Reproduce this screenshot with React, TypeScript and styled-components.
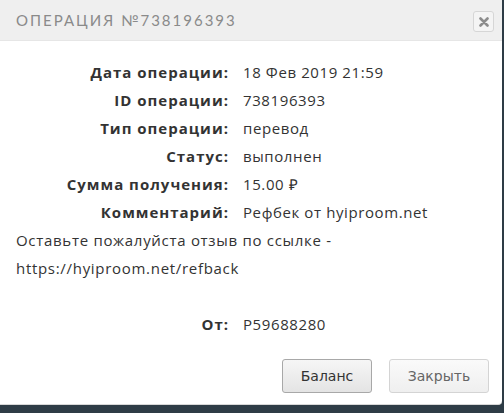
import React from 'react';
import styled, { createGlobalStyle } from 'styled-components';

const Global = createGlobalStyle`
  html, body {
    margin: 0;
    padding: 0;
    background: #2e3c46;
  }
  body {
    width: 504px;
    height: 413px;
    overflow: hidden;
  }
`;

const Dialog = styled.div`
  width: 502px;
  height: 405px;
  background: #fff;
  border-bottom: 1px solid #d8d8d8;
  border-bottom-right-radius: 4px;
  display: flex;
  flex-direction: column;
  font-family: 'Open Sans', sans-serif;
  color: #333;
  box-sizing: border-box;
`;

const Header = styled.div`
  height: 41px;
  background: #efefef;
  border-bottom: 1px solid #e6e6e6;
  box-sizing: border-box;
  display: flex;
  align-items: center;
  justify-content: space-between;
  padding: 0 8px 0 16px;
`;

const Title = styled.div`
  font-family: 'Lato', sans-serif;
  font-size: 15px;
  letter-spacing: 2px;
  color: #8a8a8a;
  text-transform: uppercase;
`;

const CloseBox = styled.button`
  width: 21px;
  height: 21px;
  padding: 0;
  border: 1px solid #d6d6d6;
  border-radius: 3px;
  background: #f4f4f4;
  display: flex;
  align-items: center;
  justify-content: center;
  margin-top: 3px;
`;

const Body = styled.div`
  padding: 17px 16px 0;
  font-size: 15px;
  line-height: 28px;
`;

const Row = styled.div<{ $gapTop?: boolean }>`
  display: grid;
  grid-template-columns: 212px 1fr;
  column-gap: 15px;
  margin-top: ${(p) => (p.$gapTop ? '28px' : '0')};
`;

const Label = styled.div`
  text-align: right;
  font-weight: 700;
  letter-spacing: 1px;
  margin-right: -1px;
  color: #333;
`;

const Value = styled.div`
  color: #333;
  letter-spacing: 0.6px;
`;

const Note = styled.div`
  color: #333;
  letter-spacing: 0.7px;
`;

const Footer = styled.div`
  margin-top: auto;
  padding: 0 13px 11px 0;
  display: flex;
  justify-content: flex-end;
  gap: 17px;
`;

const Button = styled.button<{ $primary?: boolean }>`
  height: 34px;
  padding: 0 16px;
  min-width: ${(p) => (p.$primary ? '90px' : '100px')};
  font-family: 'DejaVu Sans', sans-serif;
  font-size: 14px;
  border-radius: 3px;
  border: 1px solid ${(p) => (p.$primary ? '#a8a8a8' : '#d4d4d4')};
  color: ${(p) => (p.$primary ? '#333' : '#666')};
  background: ${(p) =>
    p.$primary
      ? 'linear-gradient(#f6f6f6, #e4e4e4)'
      : 'linear-gradient(#fafafa, #efefef)'};
`;

const rows: [string, string][] = [
  ['Дата операции:', '18 Фев 2019 21:59'],
  ['ID операции:', '738196393'],
  ['Тип операции:', 'перевод'],
  ['Статус:', 'выполнен'],
  ['Сумма получения:', '15.00 ₽'],
  ['Комментарий:', 'Рефбек от hyiproom.net'],
];

export default function App() {
  return (
    <>
      <Global />
      <Dialog>
        <Header>
          <Title>Операция №738196393</Title>
          <CloseBox aria-label="close">
            <svg width="10" height="10" viewBox="0 0 10 10">
              <path d="M1.5 1.5 L8.5 8.5 M8.5 1.5 L1.5 8.5" stroke="#8c8c8c" strokeWidth="2.6" strokeLinecap="round" />
            </svg>
          </CloseBox>
        </Header>
        <Body>
          {rows.map(([l, v]) => (
            <Row key={l}>
              <Label>{l}</Label>
              <Value>{v}</Value>
            </Row>
          ))}
          <Note>Оставьте пожалуйста отзыв по ссылке -</Note>
          <Note>https://hyiproom.net/refback</Note>
          <Row $gapTop>
            <Label>От:</Label>
            <Value>P59688280</Value>
          </Row>
        </Body>
        <Footer>
          <Button $primary>Баланс</Button>
          <Button>Закрыть</Button>
        </Footer>
      </Dialog>
    </>
  );
}
